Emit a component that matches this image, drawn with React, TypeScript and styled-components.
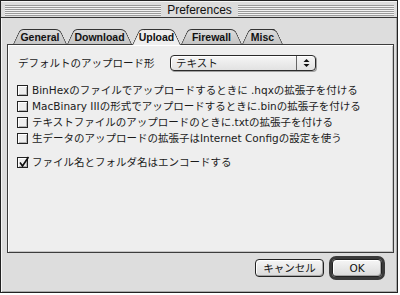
import React from "react";
import styled, { createGlobalStyle } from "styled-components";

const GlobalStyle = createGlobalStyle`
  html, body {
    margin: 0;
    padding: 0;
    background: #ffffff;
  }
  body {
    width: 400px;
    height: 295px;
    overflow: hidden;
    font-family: "DejaVu Sans", "Noto Sans CJK JP", sans-serif;
  }
`;

const Window = styled.div`
  width: 398px;
  height: 293px;
  box-sizing: border-box;
  border: 1px solid #222;
  background: #dddddd;
  display: flex;
  flex-direction: column;
  box-shadow: inset 1px 1px 0 #f6f6f6, inset -1px -1px 0 #a8a8a8;
`;

const TitleBar = styled.div`
  height: 17px;
  box-sizing: border-box;
  padding: 4px 3px 2px 4px;
  display: flex;
  align-items: center;
  border-bottom: 1px solid #333;
  background: #dcdcdc;
  box-shadow: inset 0 1px 0 #f6f6f6;
`;

const Stripes = styled.div`
  flex: 1;
  height: 11px;
  background: repeating-linear-gradient(
    to bottom,
    #9a9a9a 0 1px,
    #f2f2f2 1px 2px
  );
`;

const Title = styled.div`
  padding: 0 6px;
  font: 12px "Liberation Sans", Arial, sans-serif;
  line-height: 11px;
  color: #111;
`;

const Body = styled.div`
  flex: 1;
  display: flex;
  flex-direction: column;
  padding: 11px 3px 0 6px;
`;

const TabRow = styled.div`
  position: relative;
  z-index: 2;
  height: 15px;
  display: flex;
  align-items: flex-end;
  padding-left: 6px;
`;

const Tab = styled.div<{ $w: number; $active?: boolean }>`
  position: relative;
  z-index: ${(p) => (p.$active ? 3 : 1)};
  width: ${(p) => p.$w}px;
  height: ${(p) => (p.$active ? 16 : 15)}px;
  margin-bottom: ${(p) => (p.$active ? "-1px" : "0")};
  display: flex;
  align-items: center;
  justify-content: center;
  padding-bottom: ${(p) => (p.$active ? 1 : 0)}px;
  box-sizing: border-box;
  font: bold 10.5px "Liberation Sans", Arial, sans-serif;
  color: #111;

  &::before,
  &::after {
    content: "";
    position: absolute;
    top: 0;
    bottom: 0;
    width: 60%;
    background: ${(p) =>
      p.$active ? "#eeeeee" : "linear-gradient(#dcdcdc, #c4c4c4)"};
    border-top: 1px solid #333;
    transform-origin: bottom;
    z-index: -1;
  }
  &::before {
    left: 0;
    border-left: 1px solid #333;
    border-top-left-radius: 4px;
    transform: skewX(-25deg);
  }
  &::after {
    right: 0;
    border-right: 1px solid #333;
    border-top-right-radius: 5px;
    transform: skewX(25deg);
  }
`;

const Panel = styled.div`
  position: relative;
  z-index: 1;
  height: 209px;
  box-sizing: border-box;
  border: 1px solid #3c3c3c;
  background: #eeeeee;
  box-shadow: inset 1px 1px 0 #ffffff, inset -1px -1px 0 #c4c4c4;
  padding: 9px 9px;
  display: flex;
  flex-direction: column;
  font-size: 10.5px;
  color: #1a1a1a;
`;

const FieldRow = styled.div`
  height: 18px;
  display: flex;
  align-items: center;
`;

const FieldLabel = styled.div`
  width: 153px;
  padding-left: 1px;
  box-sizing: border-box;
  line-height: 16px;
`;

const Popup = styled.div`
  width: 146px;
  height: 16px;
  box-sizing: border-box;
  border: 1px solid #2a2a2a;
  border-radius: 4px;
  background: linear-gradient(#f6f6f6, #e2e2e2);
  box-shadow: 1px 1px 0 #a0a0a0, inset 1px 1px 0 #ffffff;
  display: flex;
  align-items: stretch;
`;

const PopupText = styled.div`
  flex: 1;
  padding-left: 5px;
  line-height: 14px;
`;

const PopupArrows = styled.div`
  width: 18px;
  border-left: 1px solid #666;
  display: flex;
  align-items: center;
  justify-content: center;
`;

const CheckList = styled.div`
  margin-top: 10px;
  display: flex;
  flex-direction: column;
`;

const CheckRow = styled.div<{ $gap?: number }>`
  height: 16px;
  margin-top: ${(p) => p.$gap ?? 0}px;
  display: flex;
  align-items: center;
  gap: 4px;
  white-space: nowrap;
  line-height: 16px;
`;

const Box = styled.span`
  position: relative;
  width: 11px;
  height: 11px;
  box-sizing: border-box;
  flex: none;
  border: 1px solid #222;
  background: #eeeeee;
  box-shadow: inset 1px 1px 0 #ffffff, inset -1px -1px 0 #b4b4b4;

  svg {
    position: absolute;
    left: 0;
    top: -2px;
    overflow: visible;
  }
`;

const Footer = styled.div`
  display: flex;
  justify-content: flex-end;
  align-items: center;
  gap: 5px;
  padding: 3px 9px 0 0;
`;

const Button = styled.button<{ $w: number }>`
  width: ${(p) => p.$w}px;
  height: 18px;
  padding: 0;
  box-sizing: border-box;
  border: 1px solid #222;
  border-radius: 4px;
  background: linear-gradient(#f6f6f6, #dadada);
  box-shadow: inset 1px 1px 0 #ffffff, inset -1px -1px 0 #a6a6a6;
  font: 10.5px "DejaVu Sans", "Noto Sans CJK JP", sans-serif;
  line-height: 16px;
  color: #111;
`;

const DefaultRing = styled.div`
  border: 3px solid #3a3a3a;
  border-radius: 7px;
  display: flex;
  box-shadow: inset 0 0 0 1px #8a8a8a;
`;

const Check = ({ checked = false }: { checked?: boolean }) => (
  <Box>
    {checked && (
      <svg width="11" height="12" viewBox="0 0 11 12">
        <path
          d="M2 6.5 L4.5 10 L10.5 1"
          fill="none"
          stroke="#111"
          strokeWidth="1.6"
        />
      </svg>
    )}
  </Box>
);

const tabs = [
  { label: "General", w: 54 },
  { label: "Download", w: 65 },
  { label: "Upload", w: 49, active: true },
  { label: "Firewall", w: 61 },
  { label: "Misc", w: 41 },
];

const options = [
  { text: "BinHexのファイルでアップロードするときに .hqxの拡張子を付ける" },
  { text: "MacBinary IIIの形式でアップロードするときに.binの拡張子を付ける" },
  { text: "テキストファイルのアップロードのときに.txtの拡張子を付ける" },
  { text: "生データのアップロードの拡張子はInternet Configの設定を使う" },
  { text: "ファイル名とフォルダ名はエンコードする", checked: true, gap: 8 },
];

export default function App() {
  return (
    <>
      <GlobalStyle />
      <Window>
        <TitleBar>
          <Stripes />
          <Title>Preferences</Title>
          <Stripes />
        </TitleBar>
        <Body>
          <TabRow>
            {tabs.map((t) => (
              <Tab key={t.label} $w={t.w} $active={t.active}>
                {t.label}
              </Tab>
            ))}
          </TabRow>
          <Panel>
            <FieldRow>
              <FieldLabel>デフォルトのアップロード形</FieldLabel>
              <Popup>
                <PopupText>テキスト</PopupText>
                <PopupArrows>
                  <svg width="7" height="10" viewBox="0 0 7 10">
                    <path d="M0.5 4 L3.5 1 L6.5 4 Z" fill="#111" />
                    <path d="M0.5 6 L3.5 9 L6.5 6 Z" fill="#111" />
                  </svg>
                </PopupArrows>
              </Popup>
            </FieldRow>
            <CheckList>
              {options.map((o) => (
                <CheckRow key={o.text} $gap={o.gap}>
                  <Check checked={o.checked} />
                  <span>{o.text}</span>
                </CheckRow>
              ))}
            </CheckList>
          </Panel>
          <Footer>
            <Button $w={69}>キャンセル</Button>
            <DefaultRing>
              <Button $w={50}>OK</Button>
            </DefaultRing>
          </Footer>
        </Body>
      </Window>
    </>
  );
}
